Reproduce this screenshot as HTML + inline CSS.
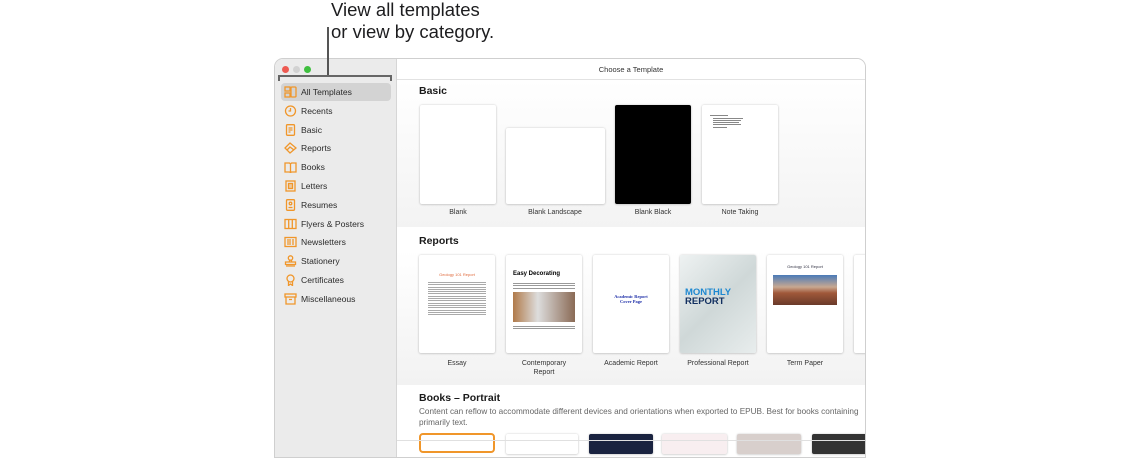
<!DOCTYPE html>
<html><head><meta charset="utf-8"><style>
*{margin:0;padding:0;box-sizing:border-box}
body{width:1140px;height:445px;background:#fff;font-family:"Liberation Sans",sans-serif;position:relative;overflow:hidden}
.ann{position:absolute;left:331px;font-size:18.5px;color:#1d1d1f;line-height:22px}
.win{position:absolute;left:274px;top:58px;width:592px;height:400px;border:1px solid #cfcfcf;border-radius:9px 9px 0 0;overflow:hidden;background:#fff}
.side{position:absolute;left:0;top:0;width:122px;height:100%;background:#ebebeb;border-right:1px solid #d6d6d6}
.dot{position:absolute;top:7px;width:7px;height:7px;border-radius:50%}
.item{position:absolute;left:6px;width:110px;height:18px;font-size:8.6px;color:#2a2a2a;line-height:18px;padding-left:20px}
.item svg{position:absolute;left:3px;top:3px}
.sel{background:#d3d3d3;border-radius:4px}
.main{position:absolute;left:122px;top:0;right:0;height:100%}
.title{position:absolute;top:0;left:0;right:0;height:21px;border-bottom:1px solid #e2e2e2;text-align:center;font-size:7.5px;color:#333;line-height:21px;background:#fff}
.sec{position:absolute;left:0;right:0}
h3{position:absolute;left:22px;font-size:10.5px;font-weight:bold;color:#1a1a1a}
.card{position:absolute;background:#fff;border-radius:2px;box-shadow:0 0 2px rgba(0,0,0,.18),0 1px 2px rgba(0,0,0,.1);overflow:hidden}
.lbl{position:absolute;font-size:7px;color:#333;text-align:center;width:90px;line-height:9px}
.ln{height:1px;background:#888;margin:1.3px 0}
.top{z-index:5}
</style></head><body>
<div class="ann" style="top:-1px">View all templates</div>
<div class="ann" style="top:21px">or view by category.</div>

<div class="win">
<div class="side">
<div class="dot" style="left:7px;background:#ee5a52"></div>
<div class="dot" style="left:18px;background:#d2d2d2"></div>
<div class="dot" style="left:29px;background:#3fbf3f"></div>
<div class="item sel" style="top:24px"><svg width="13" height="12" viewBox="0 0 13 12" fill="none" stroke="#f0962a" stroke-width="1.3"><rect x="1" y="1" width="5" height="4"/><rect x="1" y="7" width="5" height="4"/><rect x="7" y="1" width="5" height="10" rx="1"/></svg>All Templates</div>
<div class="item" style="top:42.8px"><svg width="13" height="12" viewBox="0 0 13 12" fill="none" stroke="#f0962a" stroke-width="1.3"><circle cx="6.5" cy="6" r="5"/><path d="M6.5 3v3H4.5"/></svg>Recents</div>
<div class="item" style="top:61.6px"><svg width="13" height="12" viewBox="0 0 13 12" fill="none" stroke="#f0962a" stroke-width="1.3"><rect x="2.5" y="0.7" width="8" height="10.6" rx="1"/><path d="M4.5 4h4M4.5 6h4M4.5 8h2"/></svg>Basic</div>
<div class="item" style="top:80.4px"><svg width="13" height="12" viewBox="0 0 13 12" fill="none" stroke="#f0962a" stroke-width="1.3"><path d="M1 6l5-5 6 5-6 5z M3 8l3-3 4 3"/></svg>Reports</div>
<div class="item" style="top:99.2px"><svg width="13" height="12" viewBox="0 0 13 12" fill="none" stroke="#f0962a" stroke-width="1.3"><path d="M1 2h4.5l1 1 1-1H12v9H7.5l-1 .5-1-.5H1z M6.5 3v8.5"/></svg>Books</div>
<div class="item" style="top:118px"><svg width="13" height="12" viewBox="0 0 13 12" fill="none" stroke="#f0962a" stroke-width="1.3"><rect x="2" y="1" width="9" height="10"/><rect x="4.5" y="3.5" width="4" height="5" fill="#f0962a" fill-opacity=".4"/></svg>Letters</div>
<div class="item" style="top:136.8px"><svg width="13" height="12" viewBox="0 0 13 12" fill="none" stroke="#f0962a" stroke-width="1.3"><rect x="2.5" y="0.7" width="8" height="10.6" rx="1"/><circle cx="6.5" cy="4.5" r="1.3"/><path d="M4.5 8.5h4"/></svg>Resumes</div>
<div class="item" style="top:155.6px"><svg width="13" height="12" viewBox="0 0 13 12" fill="none" stroke="#f0962a" stroke-width="1.3"><rect x="1" y="1.5" width="11" height="9"/><path d="M4.7 1.5v9M8.3 1.5v9"/></svg>Flyers &amp; Posters</div>
<div class="item" style="top:174.4px"><svg width="13" height="12" viewBox="0 0 13 12" fill="none" stroke="#f0962a" stroke-width="1.3"><rect x="1" y="1.5" width="11" height="9"/><path d="M3 4h4M3 6h4M3 8h4M9 3v6"/></svg>Newsletters</div>
<div class="item" style="top:193.2px"><svg width="13" height="12" viewBox="0 0 13 12" fill="none" stroke="#f0962a" stroke-width="1.3"><circle cx="6.5" cy="3" r="2.2"/><path d="M5.5 5v2M7.5 5v2M1.5 7h10v2.5h-10zM2 11h9"/></svg>Stationery</div>
<div class="item" style="top:212px"><svg width="13" height="12" viewBox="0 0 13 12" fill="none" stroke="#f0962a" stroke-width="1.3"><circle cx="6.5" cy="4.5" r="3.5"/><path d="M4.5 7.5V11.5l2-1.5 2 1.5V7.5"/></svg>Certificates</div>
<div class="item" style="top:230.8px"><svg width="13" height="12" viewBox="0 0 13 12" fill="none" stroke="#f0962a" stroke-width="1.3"><rect x="1" y="1" width="11" height="3"/><path d="M2 4v7h9V4M5 6.5h3"/></svg>Miscellaneous</div>
</div>
<div class="main">
<div class="title">Choose a Template</div>
<div class="sec" style="top:21px;height:147px;background:linear-gradient(#fff,#f3f3f3)">
<h3 style="top:5px">Basic</h3>
<div class="card" style="left:23px;top:25px;width:76px;height:99px"></div>
<div class="card" style="left:109px;top:48px;width:99px;height:76px"></div>
<div class="card" style="left:218px;top:25px;width:76px;height:99px;background:#000"></div>
<div class="card" style="left:305px;top:25px;width:76px;height:99px;padding:9px 8px"><div style="width:18px" class="ln"></div><div style="width:30px;margin-left:3px" class="ln"></div><div style="width:28px;margin-left:3px" class="ln"></div><div style="width:26px;margin-left:3px" class="ln"></div><div style="width:28px;margin-left:3px" class="ln"></div><div style="width:14px;margin-left:3px" class="ln"></div></div>
<div class="lbl" style="left:16px;top:128px">Blank</div>
<div class="lbl" style="left:113px;top:128px">Blank Landscape</div>
<div class="lbl" style="left:211px;top:128px">Blank Black</div>
<div class="lbl" style="left:298px;top:128px">Note Taking</div>
</div>
<div class="sec" style="top:168px;height:158px;background:linear-gradient(#fff 15%,#f2f2f2)">
<h3 style="top:8px">Reports</h3>
<div class="card" style="left:22px;top:28px;width:76px;height:98px;padding:8px 9px"><div style="color:#e06a3c;font-size:4px;text-align:center;margin:9px 0 5px">Geology 101 Report</div><div class="ln" style="background:#aaa"></div><div class="ln" style="background:#aaa"></div><div class="ln" style="background:#aaa"></div><div class="ln" style="background:#aaa"></div><div class="ln" style="background:#aaa"></div><div class="ln" style="background:#aaa"></div><div class="ln" style="background:#aaa"></div><div class="ln" style="background:#aaa"></div><div class="ln" style="background:#aaa"></div><div class="ln" style="background:#aaa"></div><div class="ln" style="background:#aaa"></div><div class="ln" style="background:#aaa"></div><div class="ln" style="background:#aaa"></div><div class="ln" style="background:#aaa"></div><div class="ln" style="background:#aaa"></div></div>
<div class="card" style="left:109px;top:28px;width:76px;height:98px;padding:10px 7px"><div style="font-size:6px;font-weight:bold;margin-top:6px">Easy Decorating</div><div class="ln" style="background:#999;margin-top:6px"></div><div class="ln" style="background:#999"></div><div class="ln" style="background:#999"></div><div style="height:30px;margin-top:3px;background:linear-gradient(90deg,#b07a4a,#ddd 40%,#8a6a55)"></div><div class="ln" style="background:#999;margin-top:4px"></div><div class="ln" style="background:#999"></div></div>
<div class="card" style="left:196px;top:28px;width:76px;height:98px;text-align:center;color:#2233aa;font-size:4.5px;font-weight:bold;padding-top:39px;font-family:'Liberation Serif',serif">Academic Report<br>Cover Page</div>
<div class="card" style="left:283px;top:28px;width:76px;height:98px;background:linear-gradient(135deg,#eef2f2,#cfd8d8 50%,#e8eded);padding:33px 5px 0"><div style="color:#1e88d0;font-weight:bold;font-size:9.5px;line-height:9px">MONTHLY</div><div style="color:#123060;font-weight:bold;font-size:9.5px;line-height:9px">REPORT</div></div>
<div class="card" style="left:370px;top:28px;width:76px;height:98px;padding:9px 6px"><div style="color:#334;font-size:4px;text-align:center">Geology 101 Report</div><div style="height:30px;margin-top:6px;background:linear-gradient(#4a7ab8,#c8a890 40%,#a0583a 60%,#6a3a2a)"></div></div>
<div class="card" style="left:457px;top:28px;width:20px;height:98px"></div>
<div class="lbl" style="left:15px;top:132px">Essay</div>
<div class="lbl" style="left:102px;top:132px">Contemporary<br>Report</div>
<div class="lbl" style="left:189px;top:132px">Academic Report</div>
<div class="lbl" style="left:276px;top:132px">Professional Report</div>
<div class="lbl" style="left:363px;top:132px">Term Paper</div>
</div>
<div class="sec" style="top:326px;height:80px;background:#fff">
<h3 style="top:7px">Books – Portrait</h3>
<div style="position:absolute;left:22px;top:21px;font-size:8.2px;color:#666;line-height:11px;width:440px">Content can reflow to accommodate different devices and orientations when exported to EPUB. Best for books containing primarily text.</div>
<div style="position:absolute;left:22px;top:48px;width:76px;height:20px;border:2px solid #f0962a;border-radius:4px"></div>
<div class="card" style="left:109px;top:49px;width:72px;height:20px"></div>
<div class="card" style="left:192px;top:49px;width:64px;height:20px;background:#1a2340"></div>
<div class="card" style="left:265px;top:49px;width:65px;height:20px;background:#f8eef0"></div>
<div class="card" style="left:340px;top:49px;width:64px;height:20px;background:#d8cfcc"></div>
<div class="card" style="left:415px;top:49px;width:60px;height:20px;background:#333"></div>
</div>
<div style="position:absolute;left:0;right:0;top:381px;height:1px;background:#e0e0e0"></div>
</div>
</div>
<div class="top" style="position:absolute;left:327px;top:27px;width:2px;height:49px;background:#555"></div>
<div class="top" style="position:absolute;left:278px;top:75px;width:114px;height:6px;border:2px solid #666;border-bottom:none"></div>
</body></html>
